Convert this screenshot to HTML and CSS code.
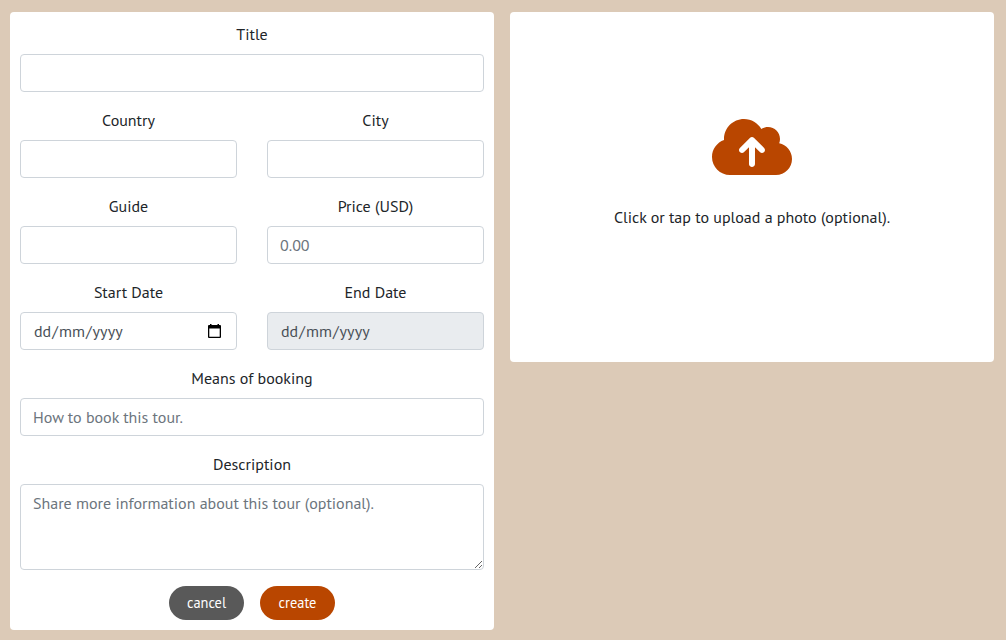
FILE: index.html
```html
<!DOCTYPE html>
<html lang="en">
<head>
<meta charset="utf-8">
<title>Create tour</title>
<link rel="stylesheet" href="styles.css">
</head>
<body>
<main class="page">
  <form class="card form">
    <div class="field"><label for="title">Title</label><input class="control" id="title" type="text"></div>
    <div class="row">
      <div class="field"><label for="country">Country</label><input class="control" id="country" type="text"></div>
      <div class="field"><label for="city">City</label><input class="control" id="city" type="text"></div>
    </div>
    <div class="row">
      <div class="field"><label for="guide">Guide</label><input class="control" id="guide" type="text"></div>
      <div class="field"><label for="price">Price (USD)</label><input class="control" id="price" type="text" placeholder="0.00"></div>
    </div>
    <div class="row">
      <div class="field"><label for="start">Start Date</label>
        <div class="control date" id="start"><span class="parts"><span>dd</span>/<span>mm</span>/<span>yyyy</span></span>
          <svg class="calendar" viewBox="0 0 13 14"><path fill="#000" fill-rule="evenodd" d="M2 0H3.500V1H9.500V0H11V1H12Q13 1 13 2V13Q13 14 12 14H1Q0 14 0 13V2Q0 1 1 1H2ZM1.300 4.500V12.700H11.700V4.500Z"/></svg>
        </div>
      </div>
      <div class="field"><label for="end">End Date</label><div class="control date disabled" id="end"><span class="parts"><span>dd</span>/<span>mm</span>/<span>yyyy</span></span></div></div>
    </div>
    <div class="field"><label for="booking">Means of booking</label><input class="control" id="booking" type="text" placeholder="How to book this tour."></div>
    <div class="field"><label for="description">Description</label><textarea class="control area" id="description" placeholder="Share more information about this tour (optional)."></textarea></div>
    <div class="actions">
      <button class="btn cancel" type="button">cancel</button>
      <button class="btn create" type="button">create</button>
    </div>
  </form>
  <section class="card upload">
    <svg class="cloud" viewBox="0 32 640 448"><path fill="#b94600" d="M144 480C64.500 480 0 415.500 0 336c0-62.800 40.200-116.200 96.200-135.900c-.1-2.700-.2-5.400-.2-8.100c0-88.400 71.600-160 160-160c59.300 0 111 32.200 138.700 80.200C409.900 102 428.300 96 448 96c53 0 96 43 96 96c0 12.200-2.300 23.800-6.400 34.600C596 238.400 640 290.100 640 352c0 70.700-57.300 128-128 128H144zm79-217c-9.400 9.400-9.400 24.600 0 33.900s24.600 9.400 33.900 0l39-39V392c0 13.300 10.700 24 24 24s24-10.700 24-24V257.900l39 39c9.400 9.400 24.600 9.400 33.900 0s9.400-24.600 0-33.900l-80-80c-9.400-9.400-24.600-9.400-33.900 0l-80 80z"/></svg>
    <p class="hint">Click or tap to upload a photo (optional).</p>
  </section>
</main>
</body>
</html>
```
FILE: styles.css
```css
* { box-sizing: border-box; }
body {
  margin: 0;
  background: #dccab7;
  color: #212529;
  font: 16px/24px "PT Sans", "Noto Sans", sans-serif;
}
.page {
  display: grid;
  grid-template-columns: 484px 484px;
  gap: 16px;
  align-items: start;
  padding: 12px 10px 0;
}
.card { background: #fff; border-radius: 4px; }
.form { height: 618px; padding: 10px; }
.field { display: flex; flex-direction: column; margin-bottom: 16px; }
.field label { height: 24px; margin-bottom: 8px; text-align: center; }
.row { display: grid; grid-template-columns: 1fr 1fr; gap: 30px; }
.control {
  width: 100%;
  height: 38px;
  padding: 6px 12px;
  border: 1px solid #ced4da;
  border-radius: 4px;
  background: #fff;
  color: #495057;
  font: inherit;
}
.control::placeholder { color: #6c757d; opacity: 1; }
.date { display: flex; justify-content: space-between; align-items: center; padding: 6px 15px 6px 12px; }
.parts { display: flex; }
.parts span { padding: 0 1px; }
.disabled { background: #e9ecef; }
.calendar { width: 13px; height: 14px; }
.area { height: 86px; resize: vertical; display: block; }
.actions { display: flex; justify-content: center; gap: 16px; }
.btn {
  width: 75px;
  height: 34px;
  padding: 0;
  border: 0;
  border-radius: 17px;
  color: #fff;
  font: 14.4px/20px "PT Sans", "Noto Sans", sans-serif;
}
.cancel { background: #595959; }
.create { background: #b94600; }
.upload {
  display: flex;
  flex-direction: column;
  align-items: center;
  height: 350px;
  padding-top: 107px;
}
.cloud { width: 80px; height: 56px; }
.hint { margin: 30px 0 0; }
```
